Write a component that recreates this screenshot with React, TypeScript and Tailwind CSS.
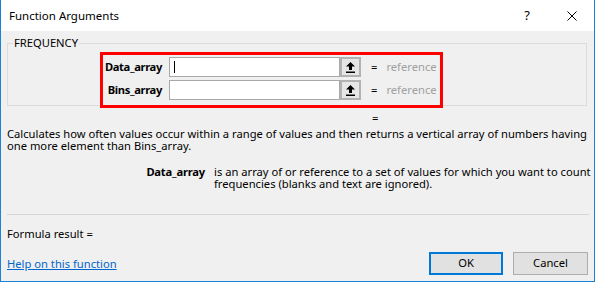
import React from 'react';

const font = { fontFamily: '"Noto Sans", "Open Sans", Arial, sans-serif' };

const PickButton: React.FC = () => (
  <div className="w-[21px] h-[20px] border-2 border-[#b2b2b2] bg-[#e6e6e6] flex items-center justify-center">
    <svg width="9" height="11" viewBox="0 0 9 11">
      <path d="M4.5 0 L9 4.5 L6 4.5 L6 8 L3 8 L3 4.5 L0 4.5 Z" fill="#000" />
      <rect x="0" y="9.5" width="9" height="1.5" fill="#000" />
    </svg>
  </div>
);

const ArgRow: React.FC<{ label: string; cursor?: boolean }> = ({ label, cursor }) => (
  <div className="flex items-center h-[20px]">
    <div className="w-[59px] flex justify-end">
      <span className="font-bold text-black whitespace-nowrap tracking-[-0.35px]">{label}</span>
    </div>
    <div className="ml-[7px] w-[171px] h-[20px] border border-[#a9a9a9] bg-white flex items-center">
      {cursor && <div className="ml-[4px] w-px h-[12px] bg-black"></div>}
    </div>
    <PickButton />
    <span className="ml-[10px] text-black">=</span>
    <span className="ml-[9px] text-[#a0a0a0]">reference</span>
  </div>
);

export default function App() {
  return (
    <div style={font} className="w-[595px] h-[282px] bg-[#f0f0f0] border border-t-0 border-[#1883d7] flex flex-col text-[11.2px] text-black overflow-hidden">
      {/* title bar */}
      <div className="h-[31px] bg-white flex items-center shrink-0">
        <span className="ml-[8px] text-[11.5px] leading-none">Function Arguments</span>
        <span className="ml-auto text-[13px] leading-none">?</span>
        <svg className="ml-[37px] mr-[17px]" width="10" height="10" viewBox="0 0 10 10">
          <path d="M0.5 0.5 L9.5 9.5 M9.5 0.5 L0.5 9.5" stroke="#000" strokeWidth="1" />
        </svg>
      </div>

      {/* group box */}
      <div className="relative mt-[12px] ml-[6px] w-[580px] h-[63px] border border-[#dcdcdc] shrink-0">
        <span className="absolute -top-[8px] left-[5px] px-px bg-[#f0f0f0] leading-[14px]">FREQUENCY</span>
        <div className="ml-[92px] mt-[8px] w-[343px] h-[56px] border-[3px] border-[#ff0000] flex flex-col pt-[2px] gap-[3px]">
          <ArgRow label="Data_array" cursor />
          <ArgRow label="Bins_array" />
        </div>
      </div>

      <div className="ml-[371px] mt-[4px] leading-[15px]">=</div>

      <div className="ml-[6px] mt-[3px] leading-[12px] whitespace-nowrap">
        <div>Calculates how often values occur within a range of values and then returns a vertical array of numbers having</div>
        <div>one more element than Bins_array.</div>
      </div>

      <div className="flex mt-[14px] leading-[12px]">
        <span className="w-[204px] text-right font-bold tracking-[-0.2px]">Data_array</span>
        <div className="ml-[9px] whitespace-nowrap">
          <div>is an array of or reference to a set of values for which you want to count</div>
          <div>frequencies (blanks and text are ignored).</div>
        </div>
      </div>

      <div className="mt-[24px] ml-[6px] w-[582px] h-px bg-[#d5d5d5] shrink-0"></div>

      <div className="ml-[6px] mt-[11px] leading-[15px]">Formula result =</div>

      <div className="flex items-center mt-[11px]">
        <a className="ml-[6px] text-[#0066cc] underline leading-[15px]" href="#">Help on this function</a>
        <button className="ml-auto w-[74px] h-[23px] border-2 border-[#0078d7] bg-[#e1e1e1]">OK</button>
        <button className="ml-[10px] mr-[6px] w-[75px] h-[23px] border border-[#adadad] bg-[#e1e1e1]">Cancel</button>
      </div>
    </div>
  );
}
